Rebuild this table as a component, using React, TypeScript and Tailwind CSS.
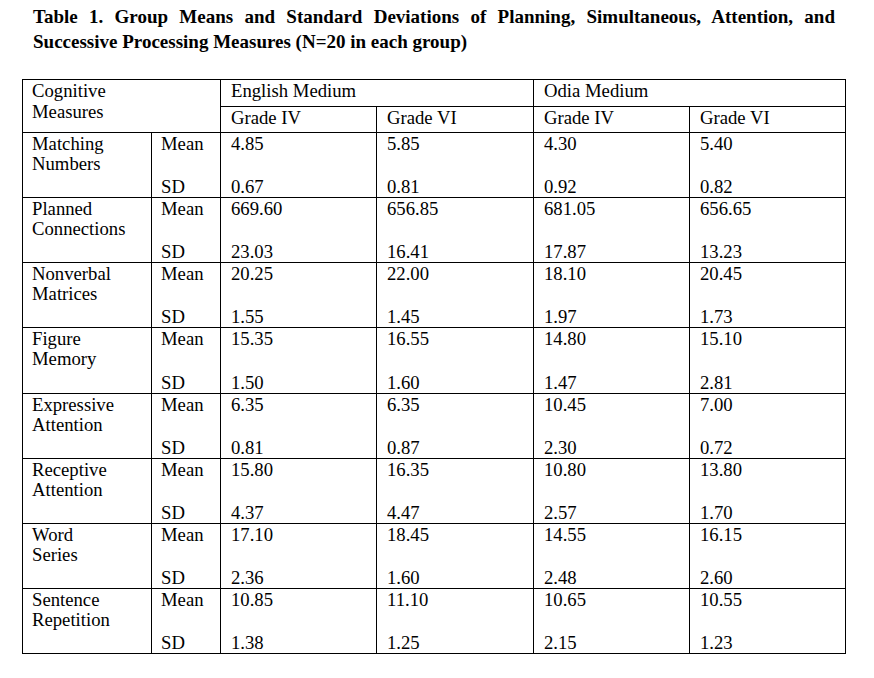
const groups = [
  { name: ["Matching", "Numbers"], mean: ["4.85", "5.85", "4.30", "5.40"], sd: ["0.67", "0.81", "0.92", "0.82"] },
  { name: ["Planned", "Connections"], mean: ["669.60", "656.85", "681.05", "656.65"], sd: ["23.03", "16.41", "17.87", "13.23"] },
  { name: ["Nonverbal", "Matrices"], mean: ["20.25", "22.00", "18.10", "20.45"], sd: ["1.55", "1.45", "1.97", "1.73"] },
  { name: ["Figure", "Memory"], mean: ["15.35", "16.55", "14.80", "15.10"], sd: ["1.50", "1.60", "1.47", "2.81"] },
  { name: ["Expressive", "Attention"], mean: ["6.35", "6.35", "10.45", "7.00"], sd: ["0.81", "0.87", "2.30", "0.72"] },
  { name: ["Receptive", "Attention"], mean: ["15.80", "16.35", "10.80", "13.80"], sd: ["4.37", "4.47", "2.57", "1.70"] },
  { name: ["Word", "Series"], mean: ["17.10", "18.45", "14.55", "16.15"], sd: ["2.36", "1.60", "2.48", "2.60"] },
  { name: ["Sentence", "Repetition"], mean: ["10.85", "11.10", "10.65", "10.55"], sd: ["1.38", "1.25", "2.15", "1.23"] },
];

const cell = "border-r border-b border-black";

export default function App() {
  return (
    <div className="h-[678px] w-[874px] bg-white text-black font-['Liberation_Serif',serif]">
      {/* caption: first line stretched edge to edge, second line left */}
      <div className="ml-[33px] w-[802px] pt-[4px] text-[19px] font-bold leading-[25px]">
        <p className="text-justify [text-align-last:justify]">
          Table 1. Group Means and Standard Deviations of Planning, Simultaneous, Attention, and
        </p>
        <p>Successive Processing Measures (N=20 in each group)</p>
      </div>

      <div className="ml-[22px] mt-[25px] grid w-[824px] grid-cols-[129px_69px_156px_157px_156px_156px] grid-rows-[27px_26px_repeat(8,65.125px)] border-l border-t border-black text-[18.7px]">
        {/* header */}
        <div className={`${cell} col-span-2 row-span-2 pl-[9px] leading-[21px]`}>
          Cognitive
          <br />
          Measures
        </div>
        <div className={`${cell} col-span-2 pl-[10px] leading-[21px]`}>English Medium</div>
        <div className={`${cell} col-span-2 pl-[10px] leading-[21px]`}>Odia Medium</div>
        {["Grade IV", "Grade VI", "Grade IV", "Grade VI"].map((g, i) => (
          <div key={i} className={`${cell} pl-[10px] leading-[21px]`}>
            {g}
          </div>
        ))}

        {/* body */}
        {groups.map((row) => (
          <>
            <div key={row.name[0]} className={`${cell} pl-[9px] pt-[1px] leading-[20px]`}>
              {row.name[0]}
              <br />
              {row.name[1]}
            </div>
            <div className={`${cell} flex flex-col justify-between pl-[9px] pt-[1px] leading-[20px]`}>
              <span>Mean</span>
              <span>SD</span>
            </div>
            {row.mean.map((m, i) => (
              <div key={i} className={`${cell} flex flex-col justify-between pl-[10px] pt-[1px] leading-[20px]`}>
                <span>{m}</span>
                <span>{row.sd[i]}</span>
              </div>
            ))}
          </>
        ))}
      </div>
    </div>
  );
}
